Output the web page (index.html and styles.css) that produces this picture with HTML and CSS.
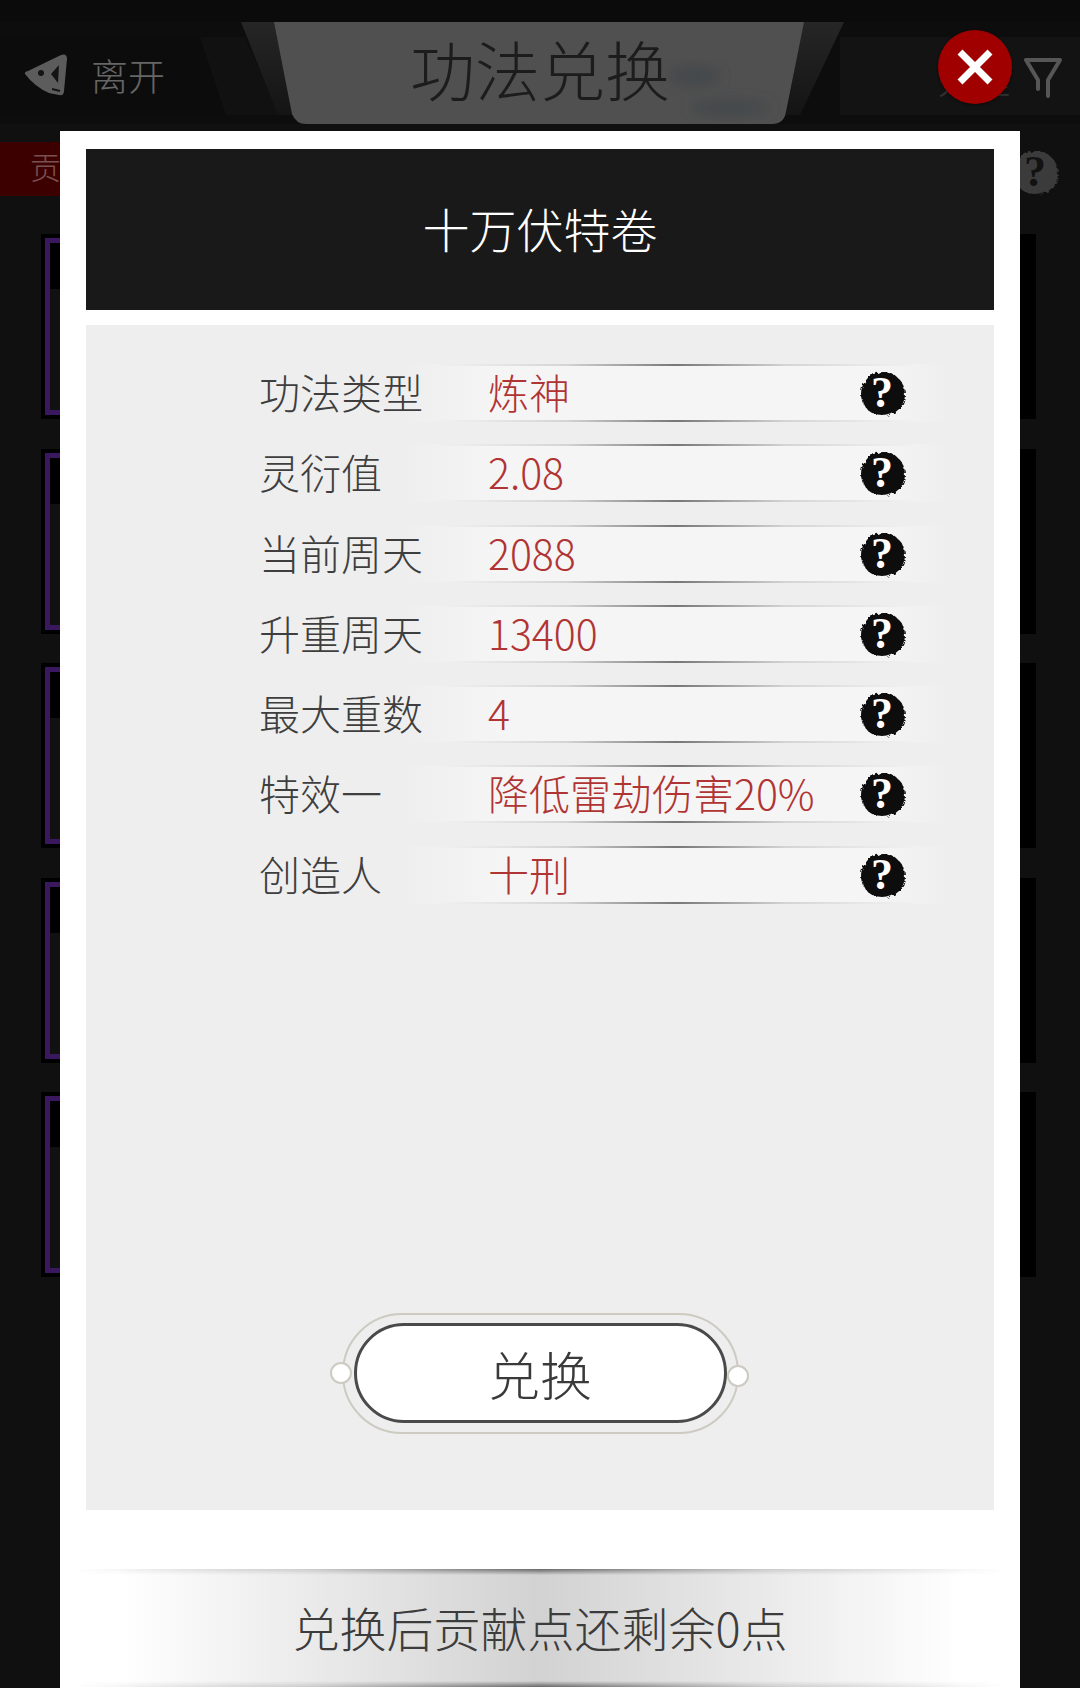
FILE: index.html
```html
<!DOCTYPE html>
<html lang="zh-CN">
<head>
    <meta charset="UTF-8">
    <title>功法兑换</title>
    <link rel="stylesheet" href="styles.css">
</head>
<body>
    <svg class="defs" width="0" height="0">
        <defs>
            <ellipse id="blob" cx="25" cy="26" rx="22" ry="22"/>
            <filter id="rough" x="-20%" y="-20%" width="140%" height="140%">
                <feTurbulence type="fractalNoise" baseFrequency="0.2" numOctaves="2" seed="4" result="noise"/>
                <feDisplacementMap in="SourceGraphic" in2="noise" scale="5"/>
                <feGaussianBlur stdDeviation="0.6"/>
            </filter>
            <filter id="smudge"><feGaussianBlur stdDeviation="6"/></filter>
            <clipPath id="tabclip">
                <path d="M274 22 H804 L786 112 Q784 124 772 124 H306 Q296 124 292 114 Z"/>
            </clipPath>
            <linearGradient id="wing" x1="0" y1="0" x2="0" y2="1">
                <stop offset="0" stop-color="#262626"/>
                <stop offset="1" stop-color="#141414"/>
            </linearGradient>
        </defs>
    </svg>

    <div class="page">
        <div class="status"></div>
        <header class="topbar">
            <svg class="tabart" width="1080" height="124" viewBox="0 0 1080 124">
                <rect x="0" y="37" width="240" height="78" fill="#0c0c0c"/>
                <rect x="840" y="37" width="240" height="78" fill="#131313"/>
                <polygon points="200,37 245,37 280,115 226,115" fill="#111"/>
                <polygon points="241,22 275,22 296,115 278,115" fill="url(#wing)"/>
                <polygon points="803,22 844,22 800,115 786,115" fill="url(#wing)"/>
                <path d="M274 22 H804 L786 112 Q784 124 772 124 H306 Q296 124 292 114 Z" fill="#505050"/>
                <g clip-path="url(#tabclip)">
                    <g filter="url(#smudge)" fill="#45494c">
                        <ellipse cx="695" cy="76" rx="26" ry="11"/>
                        <ellipse cx="730" cy="108" rx="40" ry="9"/>
                    </g>
                </g>
            </svg>
            <a class="back">
                <svg width="46" height="44" viewBox="0 0 46 44">
                    <path d="M2 21 Q1 19 5 18 L38 2 Q44 0 44 6 L41 38 Q41 43 36 42 L26 40 Q12 34 2 21 Z" fill="#5c5c5c"/>
                    <circle cx="18" cy="20" r="3" fill="#141414"/>
                    <path d="M28 21 L36 12 L35 30 Z" fill="#141414"/>
                    <path d="M29 36 L37 38" stroke="#141414" stroke-width="2"/>
                </svg>
                <span>离开</span>
            </a>
            <h1 class="page-title">功法兑换</h1>
            <div class="tools">
                <span class="tool-label">处理</span>
                <svg class="funnel" width="38" height="40" viewBox="0 0 38 40">
                    <path d="M2 2 H36 L24 22 V38 M2 2 L14 22 V31" fill="none" stroke="#565656" stroke-width="4" stroke-linecap="round" stroke-linejoin="round"/>
                </svg>
            </div>
        </header>

        <div class="filterbar">
            <span class="points-tag">贡献点</span>
            <svg class="help-dim" width="48" height="50" viewBox="0 0 48 50">
                <use href="#blob" fill="#3a3a3a" filter="url(#rough)"/>
                <text x="24" y="39" text-anchor="middle">?</text>
            </svg>
        </div>

        <div class="list">
            <div class="card"><div class="card-thumb"></div></div>
            <div class="card"><div class="card-thumb"></div></div>
            <div class="card"><div class="card-thumb"></div></div>
            <div class="card"><div class="card-thumb"></div></div>
            <div class="card"><div class="card-thumb"></div></div>
        </div>
    </div>

    <button class="close-btn" aria-label="关闭">
        <svg width="40" height="40" viewBox="0 0 40 40">
            <path d="M5 5 L35 35 M35 5 L5 35" stroke="#fff" stroke-width="7"/>
        </svg>
    </button>

    <div class="modal">
        <h2 class="modal-head">十万伏特卷</h2>
        <div class="modal-body">
            <div class="rows">
                <div class="row">
                    <span class="row-label">功法类型</span>
                    <span class="row-value">炼神</span>
                    <svg class="help" width="48" height="50" viewBox="0 0 48 50"><use href="#blob" filter="url(#rough)"/><text x="24" y="39" text-anchor="middle">?</text></svg>
                </div>
                <div class="row">
                    <span class="row-label">灵衍值</span>
                    <span class="row-value">2.08</span>
                    <svg class="help" width="48" height="50" viewBox="0 0 48 50"><use href="#blob" filter="url(#rough)"/><text x="24" y="39" text-anchor="middle">?</text></svg>
                </div>
                <div class="row">
                    <span class="row-label">当前周天</span>
                    <span class="row-value">2088</span>
                    <svg class="help" width="48" height="50" viewBox="0 0 48 50"><use href="#blob" filter="url(#rough)"/><text x="24" y="39" text-anchor="middle">?</text></svg>
                </div>
                <div class="row">
                    <span class="row-label">升重周天</span>
                    <span class="row-value">13400</span>
                    <svg class="help" width="48" height="50" viewBox="0 0 48 50"><use href="#blob" filter="url(#rough)"/><text x="24" y="39" text-anchor="middle">?</text></svg>
                </div>
                <div class="row">
                    <span class="row-label">最大重数</span>
                    <span class="row-value">4</span>
                    <svg class="help" width="48" height="50" viewBox="0 0 48 50"><use href="#blob" filter="url(#rough)"/><text x="24" y="39" text-anchor="middle">?</text></svg>
                </div>
                <div class="row">
                    <span class="row-label">特效一</span>
                    <span class="row-value">降低雷劫伤害20%</span>
                    <svg class="help" width="48" height="50" viewBox="0 0 48 50"><use href="#blob" filter="url(#rough)"/><text x="24" y="39" text-anchor="middle">?</text></svg>
                </div>
                <div class="row">
                    <span class="row-label">创造人</span>
                    <span class="row-value">十刑</span>
                    <svg class="help" width="48" height="50" viewBox="0 0 48 50"><use href="#blob" filter="url(#rough)"/><text x="24" y="39" text-anchor="middle">?</text></svg>
                </div>
            </div>

            <div class="exchange">
                <i class="dot dot-left"></i>
                <button class="exchange-btn">兑换</button>
                <i class="dot dot-right"></i>
            </div>
        </div>
        <div class="modal-foot">兑换后贡献点还剩余0点</div>
    </div>
</body>
</html>
```

FILE: styles.css
```css
* {
    box-sizing: border-box;
}
html, body {
    margin: 0;
    padding: 0;
}
body {
    position: relative;
    width: 1080px;
    height: 1688px;
    overflow: hidden;
    background: #101010;
    font-family: "Noto Sans CJK SC", "Noto Sans", sans-serif;
    font-weight: 300;
}
.defs {
    position: absolute;
}

/* page behind the dialog */
.status {
    height: 22px;
    background: #0b0b0b;
}
.topbar {
    position: relative;
    height: 102px;
    display: flex;
    align-items: center;
    justify-content: space-between;
    padding: 0 18px 0 23px;
    background: #0d0d0d;
}
.tabart {
    position: absolute;
    left: 0;
    top: -22px;
}
.back {
    position: relative;
    display: flex;
    align-items: center;
    gap: 22px;
    color: #666;
    font-size: 37px;
    margin-top: 3px;
}
.page-title {
    position: absolute;
    left: 0;
    right: 0;
    top: -1px;
    margin: 0;
    text-align: center;
    font-size: 65px;
    line-height: 94px;
    font-weight: 300;
    color: #1c1c1c;
}
.tools {
    position: relative;
    display: flex;
    align-items: center;
    gap: 14px;
    margin-top: 10px;
}
.tool-label {
    color: #333;
    font-size: 36px;
}
.filterbar {
    height: 110px;
    display: flex;
    justify-content: space-between;
    align-items: flex-start;
    padding: 18px 21px 0 0;
    background: #101010;
}
.points-tag {
    height: 54px;
    padding: 0 30px;
    background: #3d0000;
    color: #7a5050;
    font-size: 31px;
    line-height: 48px;
    white-space: nowrap;
}
.help-dim {
    margin-top: 5px;
}
.help-dim text {
    font: bold 44px "Liberation Serif", serif;
    fill: #121212;
}
.list {
    display: flex;
    flex-direction: column;
    gap: 29.5px;
    padding: 0 44px 0 41px;
}
.card {
    height: 185px;
    background: #000;
    padding: 4px 0 4px 4px;
}
.card-thumb {
    width: 200px;
    height: 100%;
    border: 5px solid #3a1860;
    border-right: 0;
    background: linear-gradient(#000 46px, #111 46px);
}

/* dialog */
.close-btn {
    position: absolute;
    left: 938px;
    top: 30px;
    width: 74px;
    height: 74px;
    padding: 0;
    border: 0;
    border-radius: 50%;
    background: #a00000;
    box-shadow: 0 1px 3px rgba(0, 0, 0, 0.5);
    display: flex;
    align-items: center;
    justify-content: center;
    z-index: 2;
}
.modal {
    position: absolute;
    left: 60px;
    top: 131px;
    width: 960px;
    height: 1570px;
    padding: 18px 26px 0;
    background: #fff;
}
.modal-head {
    height: 161px;
    margin: 0;
    background: #191919;
    color: #fff;
    text-align: center;
    font-size: 47px;
    line-height: 157px;
    font-weight: 300;
}
.modal-body {
    height: 1185px;
    margin-top: 15px;
    padding-top: 39px;
    background: #eee;
}
.rows {
    display: flex;
    flex-direction: column;
    gap: 22.3px;
    padding-left: 173px;
}
.row {
    position: relative;
    display: flex;
    align-items: center;
    height: 58px;
    width: 702px;
}
.row::before {
    content: "";
    position: absolute;
    left: 142px;
    right: 10px;
    top: 0;
    bottom: 0;
    background:
        linear-gradient(90deg, transparent 6%, #d4d4d4 30%, #777 50%, #d4d4d4 70%, transparent 94%) top / 100% 2px no-repeat,
        linear-gradient(90deg, transparent 6%, #d4d4d4 30%, #777 50%, #d4d4d4 70%, transparent 94%) bottom / 100% 2px no-repeat,
        linear-gradient(90deg, transparent, #f5f5f5 18%, #f5f5f5 85%, transparent);
}
.row-label {
    position: relative;
    width: 229px;
    flex: none;
    margin-bottom: 4px;
    color: #3e3e3e;
    font-size: 41px;
}
.row-value {
    position: relative;
    flex: 1;
    margin-bottom: 4px;
    color: #b03434;
    font-size: 41px;
    white-space: nowrap;
}
.help {
    position: relative;
    flex: none;
    margin-right: 55px;
    overflow: visible;
}
.help use {
    fill: #0a0a0a;
}
.help text {
    font: bold 44px "Liberation Serif", serif;
    fill: #fff;
}
.exchange {
    position: relative;
    width: 397px;
    height: 121px;
    margin: 409px auto 0;
    border: 2px solid #cdcac2;
    border-radius: 60px;
    display: flex;
    align-items: center;
    justify-content: center;
}
.exchange-btn {
    width: 373px;
    height: 100px;
    border: 3px solid #4a4a4a;
    border-radius: 50px;
    background: #fff;
    color: #3a3a3a;
    font-family: inherit;
    font-weight: 300;
    font-size: 52px;
}
.dot {
    position: absolute;
    width: 22px;
    height: 22px;
    border: 2px solid #cdcac2;
    border-radius: 50%;
    background: #fff;
}
.dot-left {
    left: -14px;
    top: 47px;
}
.dot-right {
    right: -12px;
    top: 50px;
}
.modal-foot {
    position: relative;
    height: 118px;
    margin: 59px -14px 0;
    text-align: center;
    color: #3c3c3c;
    font-size: 47px;
    line-height: 116px;
    background: linear-gradient(90deg, #fff 5%, #e6e6e6 30%, #d2d2d2 50%, #e6e6e6 70%, #fff 95%);
}
.modal-foot::before,
.modal-foot::after {
    content: "";
    position: absolute;
    left: 0;
    right: 0;
    height: 6px;
    background: linear-gradient(90deg, transparent, #ccc 25%, #666 50%, #ccc 75%, transparent);
}
.modal-foot::before {
    top: 0;
    -webkit-mask-image: linear-gradient(#000, transparent);
    mask-image: linear-gradient(#000, transparent);
}
.modal-foot::after {
    bottom: 0;
    -webkit-mask-image: linear-gradient(transparent, #000);
    mask-image: linear-gradient(transparent, #000);
}
```
